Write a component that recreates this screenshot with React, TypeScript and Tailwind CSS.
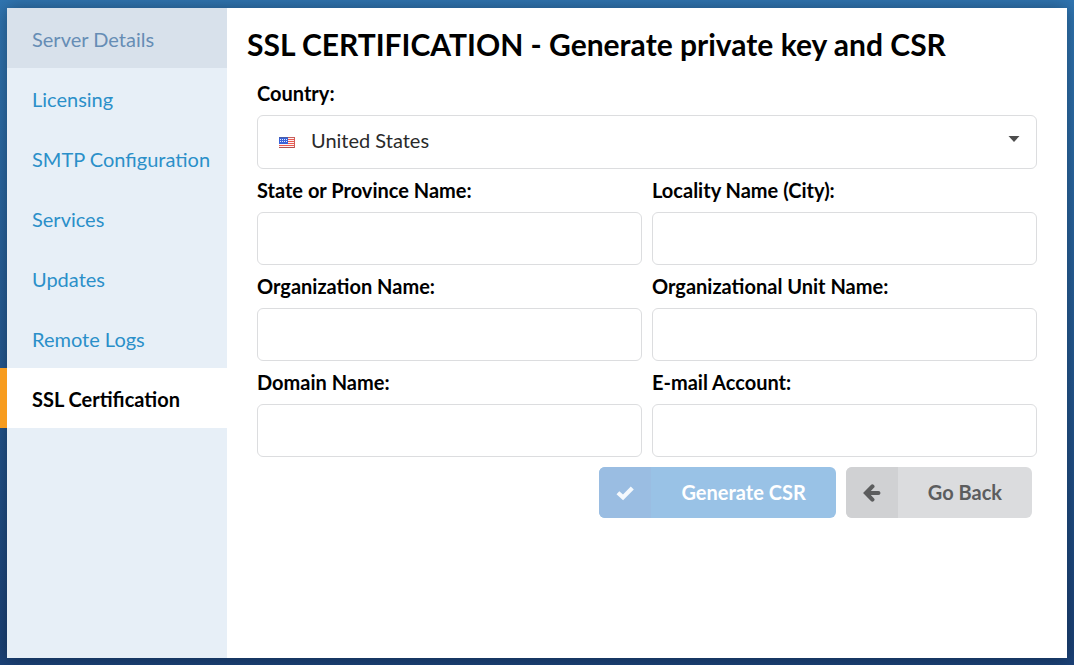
import { useState } from 'react';

const menuItems = [
  'Server Details',
  'Licensing',
  'SMTP Configuration',
  'Services',
  'Updates',
  'Remote Logs',
  'SSL Certification',
];

const fields = [
  { id: 'state', label: 'State or Province Name:', type: 'text' },
  { id: 'locality', label: 'Locality Name (City):', type: 'text' },
  { id: 'organization', label: 'Organization Name:', type: 'text' },
  { id: 'unit', label: 'Organizational Unit Name:', type: 'text' },
  { id: 'domain', label: 'Domain Name:', type: 'text' },
  { id: 'email', label: 'E-mail Account:', type: 'email' },
];

function menuItemClass(item: string, active: string) {
  if (item === active) {
    return '-ml-[7px] border-l-[7px] border-[#f79c1f] bg-white font-bold text-black';
  }
  if (item === 'Server Details') {
    return 'bg-[#d8e1eb] text-[#668db5]';
  }
  return 'text-[#2b8fc9] hover:bg-[#d8e1eb]';
}

function Sidebar() {
  const [active, setActive] = useState('SSL Certification');

  return (
    <nav className="w-[220px] shrink-0 bg-[#e7eff7]">
      {menuItems.map((item) => (
        <a
          key={item}
          href="#"
          onClick={(e) => {
            e.preventDefault();
            setActive(item);
          }}
          className={`flex h-15 items-center whitespace-nowrap pl-[25px] pt-0.5 ${menuItemClass(item, active)}`}
        >
          {item}
        </a>
      ))}
    </nav>
  );
}

function UsFlag() {
  return (
    <svg width="16" height="11" viewBox="0 0 16 11" shapeRendering="crispEdges" aria-hidden="true">
      <rect width="16" height="11" fill="#fbf3f3" />
      {[2, 4, 6, 8].map((y) => (
        <rect key={y} y={y} width="16" height="1" fill="#ee5a50" />
      ))}
      <rect width="9" height="7" fill="#3a62d8" />
      {[2, 4].map((y) =>
        [1, 3, 5, 7].map((x) => (
          <rect key={`${x}-${y}`} x={x} y={y} width="1" height="1" fill="#dfe8ff" />
        ))
      )}
      <rect x="0" y="0" width="9" height="1" fill="#4a5fa8" />
      <rect x="9" y="0" width="7" height="1" fill="#c4605f" />
      <rect x="0" y="10" width="16" height="1" fill="#b3504f" />
      <rect x="15" y="0" width="1" height="11" fill="#cf5d58" />
    </svg>
  );
}

function CheckIcon() {
  return (
    <svg width="20" height="16" viewBox="0 0 20 16" aria-hidden="true">
      <path d="M2.9 7.8 8 12.4 17.3 3" fill="none" stroke="currentColor" strokeWidth="4.2" />
    </svg>
  );
}

function ArrowLeftIcon() {
  return (
    <svg width="18" height="18" viewBox="0 0 18 18" aria-hidden="true">
      <path
        d="M9.4 2.4 3 9 9.4 15.6M4 9H15.4"
        fill="none"
        stroke="currentColor"
        strokeWidth="4.2"
        strokeLinecap="round"
        strokeLinejoin="miter"
      />
    </svg>
  );
}

function CountrySelect() {
  const [country, setCountry] = useState('us');

  return (
    <div className="col-span-2 flex flex-col gap-2.5">
      <label htmlFor="country" className="font-bold">
        Country:
      </label>
      <div className="relative">
        <select
          id="country"
          value={country}
          onChange={(e) => setCountry(e.target.value)}
          className="block h-[54px] w-full appearance-none rounded-md border border-[#dcdddf] bg-white pb-1 pl-[53px] pr-12 text-[#2a2a2a] outline-none"
        >
          <option value="us">United States</option>
        </select>
        <span className="pointer-events-none absolute inset-y-0 left-[22px] flex items-center">
          <UsFlag />
        </span>
        <span className="pointer-events-none absolute inset-y-0 right-[17px] flex items-center pb-1.5">
          <svg width="12" height="6" viewBox="0 0 12 6" aria-hidden="true">
            <path d="M0.5 0h11L6 6z" fill="#4d4d4d" />
          </svg>
        </span>
      </div>
    </div>
  );
}

export default function App() {
  return (
    <div className="flex min-h-screen bg-linear-to-b from-[#3075b1] to-[#1b4176] px-[7px] pb-[7px] pt-2 font-['Lato',sans-serif] text-[20px] leading-6">
      <div className="flex flex-1 bg-white shadow-[0_0_16px_rgba(0,0,0,0.35)]">
        <Sidebar />

        <main className="min-w-0 flex-1 px-5 pt-[18px]">
          <h1 className="text-[30px] font-bold leading-9 text-black">
            SSL CERTIFICATION - Generate private key and CSR
          </h1>

          <form className="px-2.5 pt-[19px] text-black" onSubmit={(e) => e.preventDefault()}>
            <div className="grid grid-cols-2 gap-x-2.5 gap-y-[9px]">
              <CountrySelect />
              {fields.map((field) => (
                <div key={field.id} className="flex flex-col gap-2.5">
                  <label htmlFor={field.id} className="font-bold">
                    {field.label}
                  </label>
                  <input
                    id={field.id}
                    type={field.type}
                    className="h-[53px] w-full rounded-md border border-[#dcdddf] bg-white px-5 outline-none focus:border-[#85b7d9]"
                  />
                </div>
              ))}
            </div>

            <div className="flex justify-end gap-2.5 pr-[5px] pt-2.5">
              <button
                type="submit"
                className="flex h-[51px] overflow-hidden rounded-md bg-[#99c2e6] font-bold text-white"
              >
                <span className="flex w-[52px] items-center justify-center self-stretch bg-[#9abde2] text-[#f5f9fd]">
                  <CheckIcon />
                </span>
                <span className="self-center px-[30px] pb-0.5">Generate CSR</span>
              </button>
              <button
                type="button"
                className="flex h-[51px] overflow-hidden rounded-md bg-[#dbdcde] font-bold text-[#5c5d5e]"
              >
                <span className="flex w-[52px] items-center justify-center self-stretch bg-[#d0d1d3]">
                  <ArrowLeftIcon />
                </span>
                <span className="self-center px-[30px] pb-0.5">Go Back</span>
              </button>
            </div>
          </form>
        </main>
      </div>
    </div>
  );
}
